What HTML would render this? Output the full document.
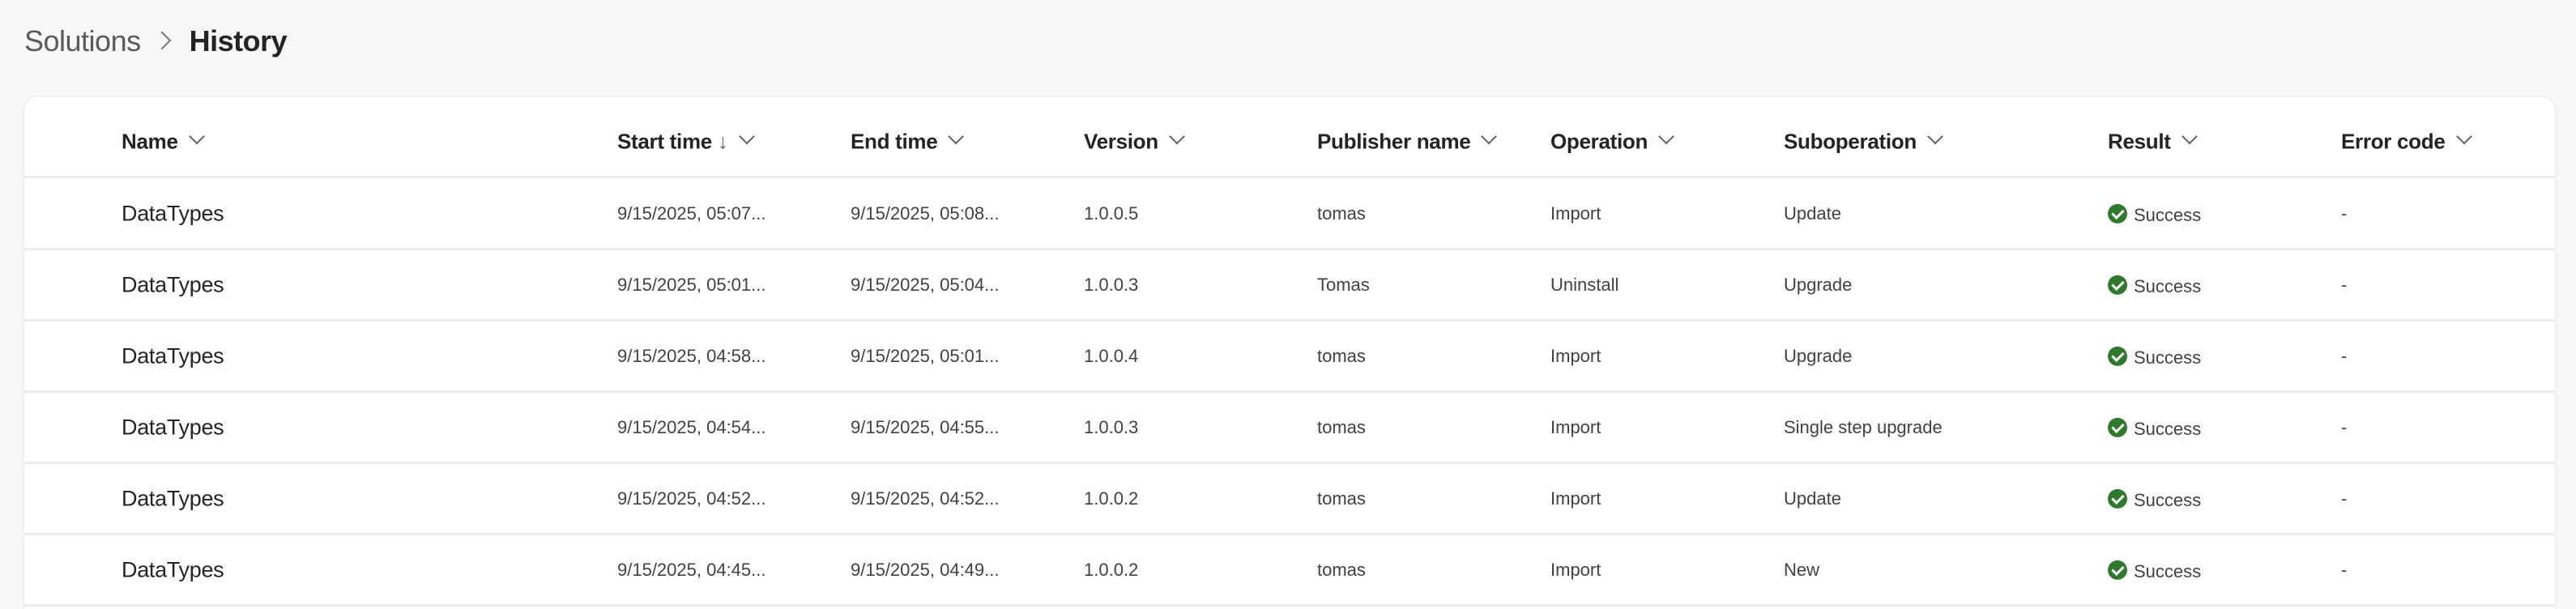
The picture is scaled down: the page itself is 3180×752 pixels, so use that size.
<!DOCTYPE html>
<html><head><meta charset="utf-8"><style>
*{margin:0;padding:0;box-sizing:border-box}
html,body{width:3180px;height:752px;overflow:hidden}
body{background:#f8f7f6;font-family:"Liberation Sans",sans-serif;position:relative}
.bc{position:absolute;top:30px;left:30px;font-size:36px;color:#5a5a5a;white-space:nowrap;letter-spacing:-0.5px}
.bc b{color:#242424;font-weight:600}
.bc .sep{display:inline-block;width:16px;height:16px;border-right:2px solid #777;border-top:2px solid #777;transform:rotate(45deg);margin:0 26px 5px 18px}
.card{position:absolute;left:30px;top:120px;width:3124px;height:632px;background:#fff;border-radius:16px 16px 0 0;box-shadow:0 0 4px rgba(0,0,0,.08)}
.line{position:absolute;left:30px;width:3124px;height:3px;background:#ededed}
.t{position:absolute;white-space:nowrap;transform:translateY(-50%)}
.h{font-size:26px;font-weight:600;color:#242424;letter-spacing:-0.3px}
.h .cv{display:inline-block;width:14px;height:14px;border-right:2px solid #616161;border-bottom:2px solid #616161;transform:rotate(45deg);margin:0 0 8px 16px}
.n{font-size:27px;color:#242424;letter-spacing:-0.3px}
.d{font-size:22px;color:#424242}
.ok{display:inline-block;width:24px;height:24px;border-radius:50%;background:#2d7a2d;vertical-align:middle;margin-right:8px;position:relative;top:-3px}
.ok:after{content:"";position:absolute;left:8px;top:4px;width:6px;height:11px;border-right:3px solid #fff;border-bottom:3px solid #fff;transform:rotate(45deg)}
</style></head><body>
<div class="bc">Solutions<span class="sep"></span><b>History</b></div>
<div class="card"></div>
<div class="line" style="top:217px"></div>
<div class="t h" style="left:150px;top:175px">Name<span class="cv"></span></div>
<div class="t h" style="left:762px;top:175px">Start time <span style="font-weight:400;color:#616161">↓</span><span class="cv"></span></div>
<div class="t h" style="left:1050px;top:175px">End time<span class="cv"></span></div>
<div class="t h" style="left:1338px;top:175px">Version<span class="cv"></span></div>
<div class="t h" style="left:1626px;top:175px">Publisher name<span class="cv"></span></div>
<div class="t h" style="left:1914px;top:175px">Operation<span class="cv"></span></div>
<div class="t h" style="left:2202px;top:175px">Suboperation<span class="cv"></span></div>
<div class="t h" style="left:2602px;top:175px">Result<span class="cv"></span></div>
<div class="t h" style="left:2890px;top:175px">Error code<span class="cv"></span></div>
<div id="rows"></div>
<script>
var data=[["9/15/2025, 05:07...","9/15/2025, 05:08...","1.0.0.5","tomas","Import","Update"],
["9/15/2025, 05:01...","9/15/2025, 05:04...","1.0.0.3","Tomas","Uninstall","Upgrade"],
["9/15/2025, 04:58...","9/15/2025, 05:01...","1.0.0.4","tomas","Import","Upgrade"],
["9/15/2025, 04:54...","9/15/2025, 04:55...","1.0.0.3","tomas","Import","Single step upgrade"],
["9/15/2025, 04:52...","9/15/2025, 04:52...","1.0.0.2","tomas","Import","Update"],
["9/15/2025, 04:45...","9/15/2025, 04:49...","1.0.0.2","tomas","Import","New"]];
var xs=[762,1050,1338,1626,1914,2202],h="";
data.forEach(function(r,i){var y=264+88*i;
h+='<div class="t n" style="left:150px;top:'+y+'px">DataTypes</div>';
r.forEach(function(c,j){h+='<div class="t d" style="left:'+xs[j]+'px;top:'+y+'px">'+c+'</div>';});
h+='<div class="t d" style="left:2602px;top:'+(y+2)+'px"><span class="ok"></span>Success</div>';
h+='<div class="t d" style="left:2890px;top:'+y+'px">-</div>';
h+='<div class="line" style="top:'+(y+42)+'px"></div>';});
document.getElementById("rows").innerHTML=h;
</script>
</body></html>
